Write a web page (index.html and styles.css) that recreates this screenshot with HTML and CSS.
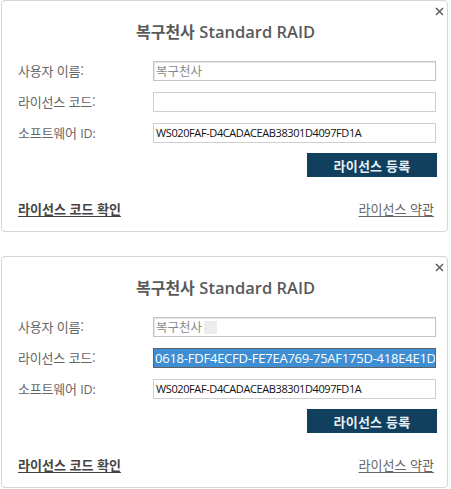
FILE: index.html
```html
<!DOCTYPE html>
<html lang="ko">
<head>
<meta charset="utf-8">
<link rel="stylesheet" href="styles.css">
</head>
<body>
<div class="stack">
  <section class="panel">
    <div class="topbar"><span class="close" aria-label="닫기"><svg width="9" height="9" viewBox="0 0 9 9"><path d="M1 1L8 8M8 1L1 8" stroke="#555" stroke-width="1.4" fill="none"/></svg></span></div>
    <h1 class="title">복구천사 <span class="latin">Standard RAID</span></h1>
    <div class="form">
      <div class="label">사용자 이름:</div>
      <div class="field field-ro"><span class="ro-text">복구천사</span></div>
      <div class="label">라이선스 코드:</div>
      <div class="field"></div>
      <div class="label">소프트웨어 <span class="latin-l">ID:</span></div>
      <div class="field"><span class="val">WS020FAF-D4CADACEAB38301D4097FD1A</span></div>
    </div>
    <div class="actions"><button class="btn">라이선스 등록</button></div>
    <div class="links">
      <a class="link-strong">라이선스 코드 확인</a>
      <a class="link">라이선스 약관</a>
    </div>
  </section>
  <section class="panel">
    <div class="topbar"><span class="close" aria-label="닫기"><svg width="9" height="9" viewBox="0 0 9 9"><path d="M1 1L8 8M8 1L1 8" stroke="#555" stroke-width="1.4" fill="none"/></svg></span></div>
    <h1 class="title">복구천사 <span class="latin">Standard RAID</span></h1>
    <div class="form">
      <div class="label">사용자 이름:</div>
      <div class="field field-ro"><span class="ro-text">복구천사</span><span class="redact"></span></div>
      <div class="label">라이선스 코드:</div>
      <div class="field field-focus"><span class="sel">0618-FDF4ECFD-FE7EA769-75AF175D-418E4E1D</span><span class="caret"></span></div>
      <div class="label">소프트웨어 <span class="latin-l">ID:</span></div>
      <div class="field"><span class="val">WS020FAF-D4CADACEAB38301D4097FD1A</span></div>
    </div>
    <div class="actions"><button class="btn">라이선스 등록</button></div>
    <div class="links">
      <a class="link-strong">라이선스 코드 확인</a>
      <a class="link">라이선스 약관</a>
    </div>
  </section>
</div>
</body>
</html>
```
FILE: styles.css
```css
html, body {
  margin: 0;
  padding: 0;
  background: #ffffff;
}
body {
  font-family: "Noto Sans CJK KR", "Noto Sans", sans-serif;
  color: #555;
}
.stack {
  display: flex;
  flex-direction: column;
  gap: 24px;
  padding-left: 1px;
  width: 447px;
}
.panel {
  box-sizing: border-box;
  height: 232px;
  border: 1px solid #d6d6d6;
  border-radius: 4px;
  display: flex;
  flex-direction: column;
  background: #fff;
}
.topbar {
  height: 20px;
  display: flex;
  justify-content: flex-end;
  align-items: center;
  padding-right: 3px;
}
.close {
  display: flex;
  width: 9px;
  height: 9px;
  margin-top: 1px;
}
.title {
  margin: 0;
  height: 20px;
  line-height: 20px;
  font-size: 16px;
  font-weight: 700;
  text-align: center;
  color: #5a5a5a;
  padding-left: 2px;
}
.title .latin {
  font-family: "Open Sans", "Noto Sans", sans-serif;
  font-size: 16.5px;
  font-weight: 600;
}
.form {
  margin-top: 20px;
  display: grid;
  grid-template-columns: 135px 1fr;
  row-gap: 11px;
  padding: 0 11px 0 16px;
}
.label {
  height: 20px;
  line-height: 20px;
  font-size: 13px;
  color: #666;
  letter-spacing: -0.2px;
}
.latin-l {
  font-family: "Open Sans", sans-serif;
  font-size: 12.5px;
}
.field {
  box-sizing: border-box;
  height: 20px;
  border: 1px solid #cfcfcf;
  display: flex;
  align-items: center;
  padding-left: 2px;
  overflow: hidden;
  background: #fff;
}
.field-ro {
  border: 1px solid #c4c4c4;
  box-shadow: inset 1px 1px 0 #e4e4e4;
}
.field-focus {
  border: 1px solid #606060;
  padding-left: 0;
}
.ro-text {
  font-size: 12.5px;
  color: #8a8a8a;
  line-height: 18px;
}
.redact {
  display: inline-block;
  width: 13px;
  height: 13px;
  background: #ececec;
  margin-left: 2px;
}
.val {
  font-family: "Open Sans", sans-serif;
  font-size: 11px;
  color: #111;
  letter-spacing: -0.4px;
  line-height: 18px;
}
.sel {
  font-family: "Open Sans", sans-serif;
  font-size: 13px;
  color: #fff;
  background: #3d8ed2;
  line-height: 18px;
  height: 18px;
  letter-spacing: -0.23px;
  padding-left: 1px;
  white-space: nowrap;
}
.caret {
  display: inline-block;
  width: 1px;
  height: 16px;
  background: #000;
}
.actions {
  margin-top: 10px;
  display: flex;
  justify-content: flex-end;
  padding-right: 10px;
}
.btn {
  width: 130px;
  height: 24px;
  border: 0;
  background: #11405f;
  color: #e9eef2;
  font-family: "Noto Sans CJK KR", sans-serif;
  font-size: 13px;
  font-weight: 700;
  padding: 0;
  letter-spacing: 0.2px;
}
.links {
  margin-top: 23px;
  display: flex;
  justify-content: space-between;
  padding: 0 13px 0 16px;
  line-height: 18px;
  font-size: 13px;
}
.link-strong {
  color: #444;
  font-weight: 700;
  text-decoration: underline;
  text-underline-offset: 2px;
}
.link {
  color: #666;
  text-decoration: underline;
  text-underline-offset: 2px;
}
```
